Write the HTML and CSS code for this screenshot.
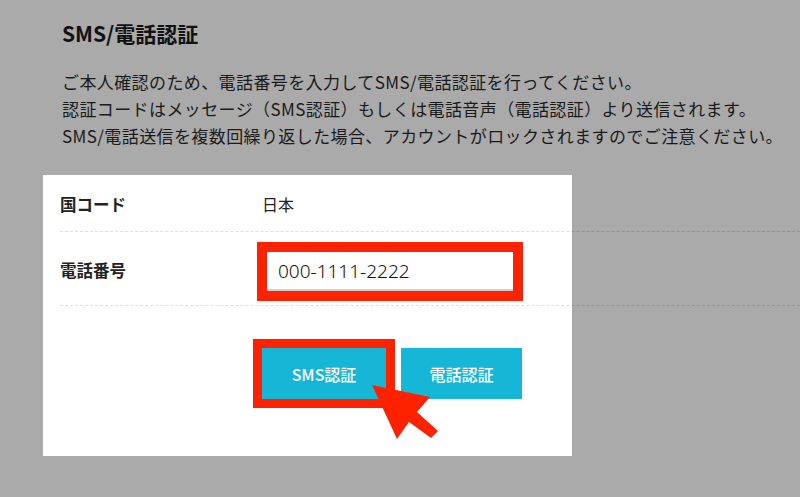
FILE: index.html
```html
<!DOCTYPE html>
<html lang="ja">
<head>
<meta charset="utf-8">
<link rel="stylesheet" href="styles.css">
</head>
<body>
<main class="page">
  <section class="intro">
    <h1 class="title">SMS/電話認証</h1>
    <p class="lead">ご本人確認のため、電話番号を入力してSMS/電話認証を行ってください。<br>認証コードはメッセージ（SMS認証）もしくは電話音声（電話認証）より送信されます。<br>SMS/電話送信を複数回繰り返した場合、アカウントがロックされますのでご注意ください。</p>
  </section>
  <section class="card">
    <div class="row row-country">
      <div class="label">国コード</div>
      <div class="value country">日本</div>
    </div>
    <div class="row row-phone">
      <div class="label">電話番号</div>
      <div class="value">
        <div class="highlight">
          <div class="input">000-1111-2222</div>
        </div>
      </div>
    </div>
    <div class="actions">
      <div class="btn-wrap">
        <button class="btn btn-marked">SMS認証</button>
        <svg class="arrow" width="80" height="70" viewBox="0 0 80 70">
          <polygon points="10,7 68,19 55,34 76,53 69,60 47,44 35,61" fill="#ff2200"/>
        </svg>
      </div>
      <button class="btn">電話認証</button>
    </div>
  </section>
</main>
</body>
</html>
```

FILE: styles.css
```css
html, body {
  margin: 0;
  padding: 0;
  background: #aaaaaa;
  overflow: hidden;
}
body {
  width: 800px;
  height: 497px;
  font-family: "Noto Sans CJK JP", "Noto Sans", sans-serif;
  color: #141414;
}
.page {
  padding-top: 18px;
}
.intro {
  padding-left: 62px;
}
.title {
  margin: 0;
  font-size: 21px;
  line-height: 30px;
  font-weight: 700;
  color: #111;
}
.lead {
  margin: 20px 0 0;
  font-size: 17px;
  line-height: 27px;
  letter-spacing: 0.4px;
  color: #1a1a1a;
  white-space: nowrap;
}
.card {
  margin: 26px 0 0 43px;
  width: 529px;
  box-sizing: border-box;
  padding-left: 17px;
  background: #fff;
  color: #222;
}
.row {
  width: 740px;
  display: flex;
  align-items: center;
  border-bottom: 1px dashed rgba(0, 0, 0, 0.13);
}
.row-country {
  height: 56px;
}
.row-phone {
  height: 73px;
}
.label {
  width: 197px;
  font-size: 16.5px;
  font-weight: 700;
  padding-top: 2px;
}
.value {
  font-size: 16px;
}
.country {
  padding-left: 5px;
  padding-top: 2px;
}
.row-phone .value {
  padding-top: 5px;
}
.highlight {
  border: 10px solid #ff2200;
  width: 246px;
}
.input {
  height: 37px;
  border-bottom: 2px solid #cfcfcf;
  background: #fff;
  padding-left: 11px;
  font-family: "Noto Sans", sans-serif;
  font-size: 19px;
  font-weight: 300;
  line-height: 38px;
  color: #111;
}
.actions {
  display: flex;
  gap: 15px;
  padding: 42px 0 57px 202px;
}
.btn-wrap {
  position: relative;
}
.btn {
  display: block;
  border: 0;
  margin: 0;
  background: #16b6d6;
  color: #fff;
  font-family: "Noto Sans CJK JP", "Noto Sans", sans-serif;
  font-size: 16px;
  font-weight: 500;
  height: 51px;
  width: 121px;
  padding: 0;
}
.btn-marked {
  width: 124px;
  outline: 9px solid #ff2200;
}
.arrow {
  position: absolute;
  left: 100px;
  top: 30px;
}
```
